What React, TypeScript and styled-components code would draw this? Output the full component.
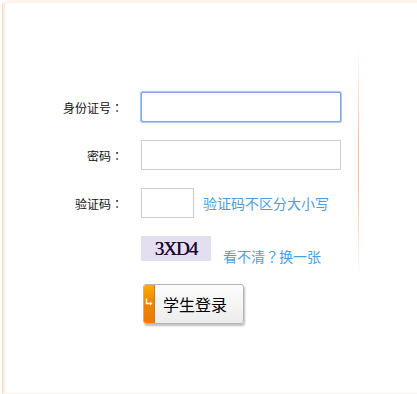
import styled, { createGlobalStyle } from 'styled-components';

const GlobalStyle = createGlobalStyle`
  html, body {
    margin: 0;
    padding: 0;
    background: #ffffff;
  }
  body {
    font-family: "Noto Sans CJK SC", "Noto Sans", sans-serif;
  }
`;

export default function App() {
  return (
    <>
      <GlobalStyle />
      <Panel>
        <Form>
          <Row>
            <Label>
              身份证号<Punct>：</Punct>
            </Label>
            <Field focused />
          </Row>
          <Row>
            <Label>
              密码<Punct>：</Punct>
            </Label>
            <Field type="password" />
          </Row>
          <Row>
            <Label>
              验证码<Punct>：</Punct>
            </Label>
            <Cell>
              <Field short />
              <Hint href="#">验证码不区分大小写</Hint>
            </Cell>
          </Row>
          <CaptchaRow>
            <span />
            <Cell>
              <Captcha>3XD4</Captcha>
              <Refresh href="#">
                看不清<Punct>？</Punct>换一张
              </Refresh>
            </Cell>
          </CaptchaRow>
          <ButtonRow>
            <LoginButton type="button">
              <Strip>
                <svg width="8" height="8" viewBox="0 0 8 8">
                  <path d="M1.5 0.5 V5.5 H6" stroke="#fff" strokeWidth="1.4" fill="none" />
                  <path d="M5 3.5 L7.5 5.5 L5 7.5 Z" fill="#fff" />
                </svg>
              </Strip>
              <ButtonText>学生登录</ButtonText>
            </LoginButton>
          </ButtonRow>
        </Form>
        <Divider />
      </Panel>
    </>
  );
}

const Panel = styled.div`
  box-sizing: border-box;
  height: 394px;
  margin-left: 2px;
  display: flex;
  align-items: flex-start;
  border-left: 1px solid #fbd5c0;
  border-top: 3px solid #fff4ec;
  border-bottom: 1px solid #fff1ea;
  border-top-left-radius: 6px;
  box-shadow: inset 2px 0 0 #fff0e6;
`;

const Form = styled.div`
  width: 355px;
  padding-top: 89px;
  display: flex;
  flex-direction: column;
  gap: 18px;
`;

const Row = styled.div`
  display: grid;
  grid-template-columns: 120px 1fr;
  column-gap: 18px;
  align-items: center;
  height: 30px;
`;

const CaptchaRow = styled(Row)`
  align-items: stretch;
`;

const ButtonRow = styled.div`
  padding-left: 140px;
`;

const Label = styled.label`
  text-align: right;
  font-size: 12px;
  color: #111;
`;

/* full-width punctuation centred in its box, as in the original */
const Punct = styled.span`
  font-family: "Noto Sans CJK JP", "Noto Sans CJK SC", sans-serif;
`;

const Cell = styled.div`
  display: flex;
  align-items: center;
`;

const Field = styled.input<{ focused?: boolean; short?: boolean }>`
  box-sizing: border-box;
  width: ${(p) => (p.short ? '53px' : '200px')};
  height: 30px;
  margin: 0;
  padding: 0 4px;
  outline: none;
  background: #fff;
  border: 1px solid ${(p) => (p.focused ? '#7ca5ea' : '#cccccc')};
  border-radius: ${(p) => (p.focused ? '2px' : '0')};
  box-shadow: ${(p) => (p.focused ? '0 0 1px 0.5px #a8c4f3' : 'none')};
`;

const Hint = styled.a`
  margin-left: 9px;
  font-size: 14px;
  color: #4a9ee0;
  text-decoration: none;
`;

const Captcha = styled.div`
  align-self: flex-start;
  width: 70px;
  height: 25px;
  background: #e3dff0;
  display: flex;
  align-items: center;
  justify-content: center;
  font-family: "Liberation Serif", "DejaVu Serif", serif;
  font-size: 19px;
  color: #210430;
  letter-spacing: -1px;
  text-shadow: 0.3px 0 0 #210430;
`;

const Refresh = styled(Hint)`
  align-self: flex-end;
  margin-left: 12px;
  line-height: 20px;
`;

const LoginButton = styled.button`
  box-sizing: border-box;
  display: flex;
  align-items: stretch;
  width: 101px;
  height: 40px;
  padding: 0;
  border: 1px solid #b5b5b5;
  border-radius: 3px;
  overflow: hidden;
  background: linear-gradient(#fdfdfd, #ececec);
  box-shadow: 1px 2px 2px rgba(0, 0, 0, 0.25);
  cursor: pointer;
`;

const Strip = styled.span`
  width: 11px;
  background: linear-gradient(#f7b200, #f08300 45%, #ee7c00);
  border-right: 1px solid #e27400;
  display: flex;
  justify-content: center;
  padding-top: 13px;
  box-sizing: border-box;
`;

const ButtonText = styled.span`
  flex: 1;
  display: flex;
  align-items: center;
  justify-content: center;
  font-family: "Noto Sans CJK SC", sans-serif;
  font-size: 16px;
  color: #000;
  padding-right: 8px;
`;

const Divider = styled.div`
  width: 1px;
  height: 230px;
  margin-top: 45px;
  background: linear-gradient(
    rgba(255, 190, 150, 0),
    #ffbf9c 40%,
    #ffbf9c 60%,
    rgba(255, 190, 150, 0)
  );
`;
